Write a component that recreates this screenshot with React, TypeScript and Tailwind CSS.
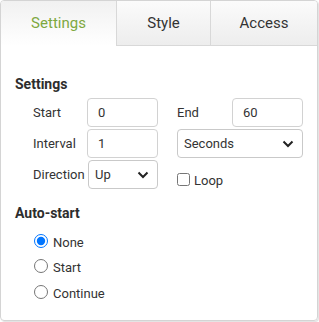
import { useState } from 'react';

const tabs = ['Settings', 'Style', 'Access'];

function Chevron() {
  return (
    <svg width="12" height="8" viewBox="0 0 12 8" className="absolute right-[8px] top-1/2 -translate-y-1/2 pointer-events-none">
      <path d="M1.5 1.5 L6 6 L10.5 1.5" fill="none" stroke="#222" strokeWidth="2" />
    </svg>
  );
}

function Select({ value, width }: { value: string; width: string }) {
  return (
    <div className={`relative h-[29px] ${width} rounded-[4px] border border-[#c9c9c9] bg-white flex items-center pl-[6px] text-[13px] text-[#333]`}>
      {value}
      <Chevron />
    </div>
  );
}

function Input({ value }: { value: string }) {
  return (
    <div className="h-[29px] w-[71px] rounded-[4px] border border-[#d2d2d2] bg-white flex items-center pl-[10px] text-[13px] text-[#333]">
      {value}
    </div>
  );
}

export default function App() {
  const [active, setActive] = useState(0);
  const [auto, setAuto] = useState('None');

  return (
    <div className="w-[319px] h-[322px] bg-white" style={{ fontFamily: 'Roboto, "Liberation Sans", sans-serif' }}>
      <div className="w-[318px] h-[321px] border border-[#d4d4d4] rounded-[4px] shadow-[1px_1px_1px_rgba(0,0,0,0.12)] overflow-hidden flex flex-col">
        {/* Tabs */}
        <div className="flex h-[45px] shrink-0">
          {tabs.map((t, i) => (
            <button
              key={t}
              onClick={() => setActive(i)}
              className={
                'h-full flex items-center justify-center text-[15px] ' +
                (i === 0 ? 'w-[115px] ' : i === 1 ? 'w-[94px] ' : 'flex-1 ') +
                (i > 0 ? 'border-l border-[#d8d8d8] ' : '') +
                (active === i
                  ? 'bg-gradient-to-b from-[#f1f1f1] to-white text-[#7ea83f]'
                  : 'bg-gradient-to-b from-[#fbfbfb] to-[#ededed] text-[#333] border-b border-b-[#d8d8d8]')
              }
            >
              {t}
            </button>
          ))}
        </div>

        {/* Content */}
        <div className="px-[14px] pt-[28px] text-[13px] text-[#333]">
          <div className="text-[14px] font-bold leading-[20px] text-[#2d2d2d]">Settings</div>

          <div className="mt-[4px] pl-[18px] flex flex-col gap-[2px]">
            <div className="flex items-center">
              <span className="w-[54px]">Start</span>
              <Input value="0" />
              <span className="w-[19px]" />
              <span className="w-[55px]">End</span>
              <Input value="60" />
            </div>
            <div className="flex items-center">
              <span className="w-[54px]">Interval</span>
              <Input value="1" />
              <span className="w-[19px]" />
              <Select value="Seconds" width="w-[126px]" />
            </div>
            <div className="flex items-center">
              <span className="w-[55px]">Direction</span>
              <Select value="Up" width="w-[70px]" />
              <span className="w-[19px]" />
              <label className="flex items-center gap-[4px] translate-y-[5px]">
                <input type="checkbox" className="w-[13px] h-[13px] m-0" />
                <span className="mt-[3px]">Loop</span>
              </label>
            </div>
          </div>

          <div className="mt-[14px] text-[14px] font-bold leading-[20px] text-[#2d2d2d]">Auto-start</div>

          <div className="mt-[5px] pl-[19px] flex flex-col">
            {['None', 'Start', 'Continue'].map((o) => (
              <label key={o} className="flex items-center gap-[5px] h-[25.5px]">
                <input
                  type="radio"
                  name="auto"
                  checked={auto === o}
                  onChange={() => setAuto(o)}
                  className="w-[14px] h-[14px] m-0"
                />
                <span className="mt-[3px]">{o}</span>
              </label>
            ))}
          </div>
        </div>
      </div>
    </div>
  );
}
